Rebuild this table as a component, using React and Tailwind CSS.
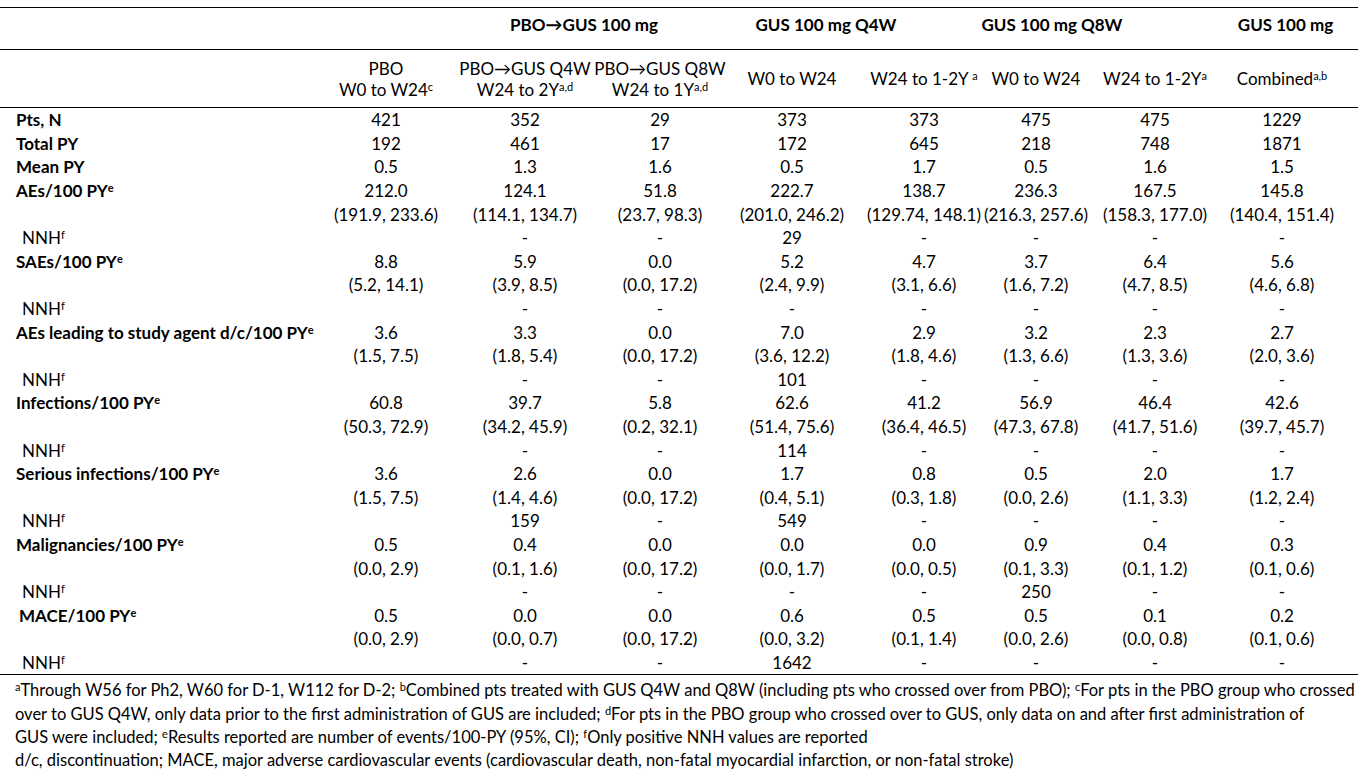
import React from "react";

const COLS =
  "grid grid-cols-[318px_136px_142px_128px_136px_128px_96px_142px_112px]";

const Sup = ({ children }) => (
  <sup className="text-[11px] top-[-0.45em]">{children}</sup>
);

const rows = [
  { label: "Pts, N", bold: true, vals: ["421", "352", "29", "373", "373", "475", "475", "1229"] },
  { label: "Total PY", bold: true, vals: ["192", "461", "17", "172", "645", "218", "748", "1871"] },
  { label: "Mean PY", bold: true, vals: ["0.5", "1.3", "1.6", "0.5", "1.7", "0.5", "1.6", "1.5"] },
  { label: "AEs/100 PY", sup: "e", bold: true, vals: ["212.0", "124.1", "51.8", "222.7", "138.7", "236.3", "167.5", "145.8"] },
  { vals: ["(191.9, 233.6)", "(114.1, 134.7)", "(23.7, 98.3)", "(201.0, 246.2)", "(129.74, 148.1)", "(216.3, 257.6)", "(158.3, 177.0)", "(140.4, 151.4)"] },
  { nnh: true, vals: ["", "-", "-", "29", "-", "-", "-", "-"] },
  { label: "SAEs/100 PY", sup: "e", bold: true, vals: ["8.8", "5.9", "0.0", "5.2", "4.7", "3.7", "6.4", "5.6"] },
  { vals: ["(5.2, 14.1)", "(3.9, 8.5)", "(0.0, 17.2)", "(2.4, 9.9)", "(3.1, 6.6)", "(1.6, 7.2)", "(4.7, 8.5)", "(4.6, 6.8)"] },
  { nnh: true, vals: ["", "-", "-", "-", "-", "-", "-", "-"] },
  { label: "AEs leading to study agent d/c/100 PY", sup: "e", bold: true, vals: ["3.6", "3.3", "0.0", "7.0", "2.9", "3.2", "2.3", "2.7"] },
  { vals: ["(1.5, 7.5)", "(1.8, 5.4)", "(0.0, 17.2)", "(3.6, 12.2)", "(1.8, 4.6)", "(1.3, 6.6)", "(1.3, 3.6)", "(2.0, 3.6)"] },
  { nnh: true, vals: ["", "-", "-", "101", "-", "-", "-", "-"] },
  { label: "Infections/100 PY", sup: "e", bold: true, vals: ["60.8", "39.7", "5.8", "62.6", "41.2", "56.9", "46.4", "42.6"] },
  { vals: ["(50.3, 72.9)", "(34.2, 45.9)", "(0.2, 32.1)", "(51.4, 75.6)", "(36.4, 46.5)", "(47.3, 67.8)", "(41.7, 51.6)", "(39.7, 45.7)"] },
  { nnh: true, vals: ["", "-", "-", "114", "-", "-", "-", "-"] },
  { label: "Serious infections/100 PY", sup: "e", bold: true, vals: ["3.6", "2.6", "0.0", "1.7", "0.8", "0.5", "2.0", "1.7"] },
  { vals: ["(1.5, 7.5)", "(1.4, 4.6)", "(0.0, 17.2)", "(0.4, 5.1)", "(0.3, 1.8)", "(0.0, 2.6)", "(1.1, 3.3)", "(1.2, 2.4)"] },
  { nnh: true, vals: ["", "159", "-", "549", "-", "-", "-", "-"] },
  { label: "Malignancies/100 PY", sup: "e", bold: true, vals: ["0.5", "0.4", "0.0", "0.0", "0.0", "0.9", "0.4", "0.3"] },
  { vals: ["(0.0, 2.9)", "(0.1, 1.6)", "(0.0, 17.2)", "(0.0, 1.7)", "(0.0, 0.5)", "(0.1, 3.3)", "(0.1, 1.2)", "(0.1, 0.6)"] },
  { nnh: true, vals: ["", "-", "-", "-", "-", "250", "-", "-"] },
  { label: "MACE/100 PY", sup: "e", bold: true, indent: true, vals: ["0.5", "0.0", "0.0", "0.6", "0.5", "0.5", "0.1", "0.2"] },
  { vals: ["(0.0, 2.9)", "(0.0, 0.7)", "(0.0, 17.2)", "(0.0, 3.2)", "(0.1, 1.4)", "(0.0, 2.6)", "(0.0, 0.8)", "(0.1, 0.6)"] },
  { nnh: true, vals: ["", "-", "-", "1642", "-", "-", "-", "-"] },
];

const subHeads = [
  [<>PBO</>, <>W0 to W24<Sup>c</Sup></>],
  [<>PBO→GUS Q4W</>, <>W24 to 2Y<Sup>a,d</Sup></>],
  [<>PBO→GUS Q8W</>, <>W24 to 1Y<Sup>a,d</Sup></>],
  [<>W0 to W24</>],
  [<>W24 to 1-2Y <Sup>a</Sup></>],
  [<>W0 to W24</>],
  [<>W24 to 1-2Y<Sup>a</Sup></>],
  [<>Combined<Sup>a,b</Sup></>],
];

const Cell = ({ children }) => (
  <div className="flex justify-center whitespace-nowrap">{children}</div>
);

const RowLabel = ({ row }) => {
  if (row.nnh)
    return (
      <div className="pl-[22px]">
        NNH<Sup>f</Sup>
      </div>
    );
  if (!row.label) return <div />;
  return (
    <div className={`font-bold whitespace-nowrap ${row.indent ? "pl-[19px]" : "pl-[16px]"}`}>
      {row.label}
      {row.sup && <Sup>{row.sup}</Sup>}
    </div>
  );
};

export default function App() {
  return (
    <div className="min-h-screen bg-white text-black font-['Lato',sans-serif] text-[17px] leading-none">
      <div className="w-[1358px] pt-[7px]">
        {/* group headings */}
        <div className="border-t border-black h-[42px] grid grid-cols-[447px_274px_210px_242px_1fr] font-bold pt-[8px]">
          <div />
          <Cell>PBO→GUS 100 mg</Cell>
          <Cell>GUS 100 mg Q4W</Cell>
          <Cell>GUS 100 mg Q8W</Cell>
          <div className="flex justify-center pl-[40px]">GUS 100 mg</div>
        </div>

        {/* sub headings */}
        <div className={`${COLS} border-t border-black h-[58px] items-center`}>
          <div />
          {subHeads.map((lines, i) => (
            <div key={i} className="flex flex-col items-center gap-[4px] whitespace-nowrap">
              {lines.map((l, j) => (
                <div key={j}>{l}</div>
              ))}
            </div>
          ))}
        </div>

        {/* body */}
        <div className="border-t border-black">
          {rows.map((row, i) => (
            <div key={i} className={`${COLS} h-[23.6px] items-center`}>
              <RowLabel row={row} />
              {row.vals.map((v, j) => (
                <Cell key={j}>{v}</Cell>
              ))}
            </div>
          ))}
        </div>

        {/* footnotes */}
        <div className="border-t border-black pt-[4px] pl-[15px] text-[16.5px] leading-[23.3px] whitespace-nowrap">
          <div>
            <Sup>a</Sup>Through W56 for Ph2, W60 for D-1, W112 for D-2; <Sup>b</Sup>Combined pts treated with GUS Q4W and Q8W (including pts who crossed over from PBO); <Sup>c</Sup>For pts in the PBO group who crossed
          </div>
          <div>
            over to GUS Q4W, only data prior to the first administration of GUS are included; <Sup>d</Sup>For pts in the PBO group who crossed over to GUS, only data on and after first administration of
          </div>
          <div>
            GUS were included; <Sup>e</Sup>Results reported are number of events/100-PY (95%, CI); <Sup>f</Sup>Only positive NNH values are reported
          </div>
          <div>
            d/c, discontinuation; MACE, major adverse cardiovascular events (cardiovascular death, non-fatal myocardial infarction, or non-fatal stroke)
          </div>
        </div>
      </div>
    </div>
  );
}
